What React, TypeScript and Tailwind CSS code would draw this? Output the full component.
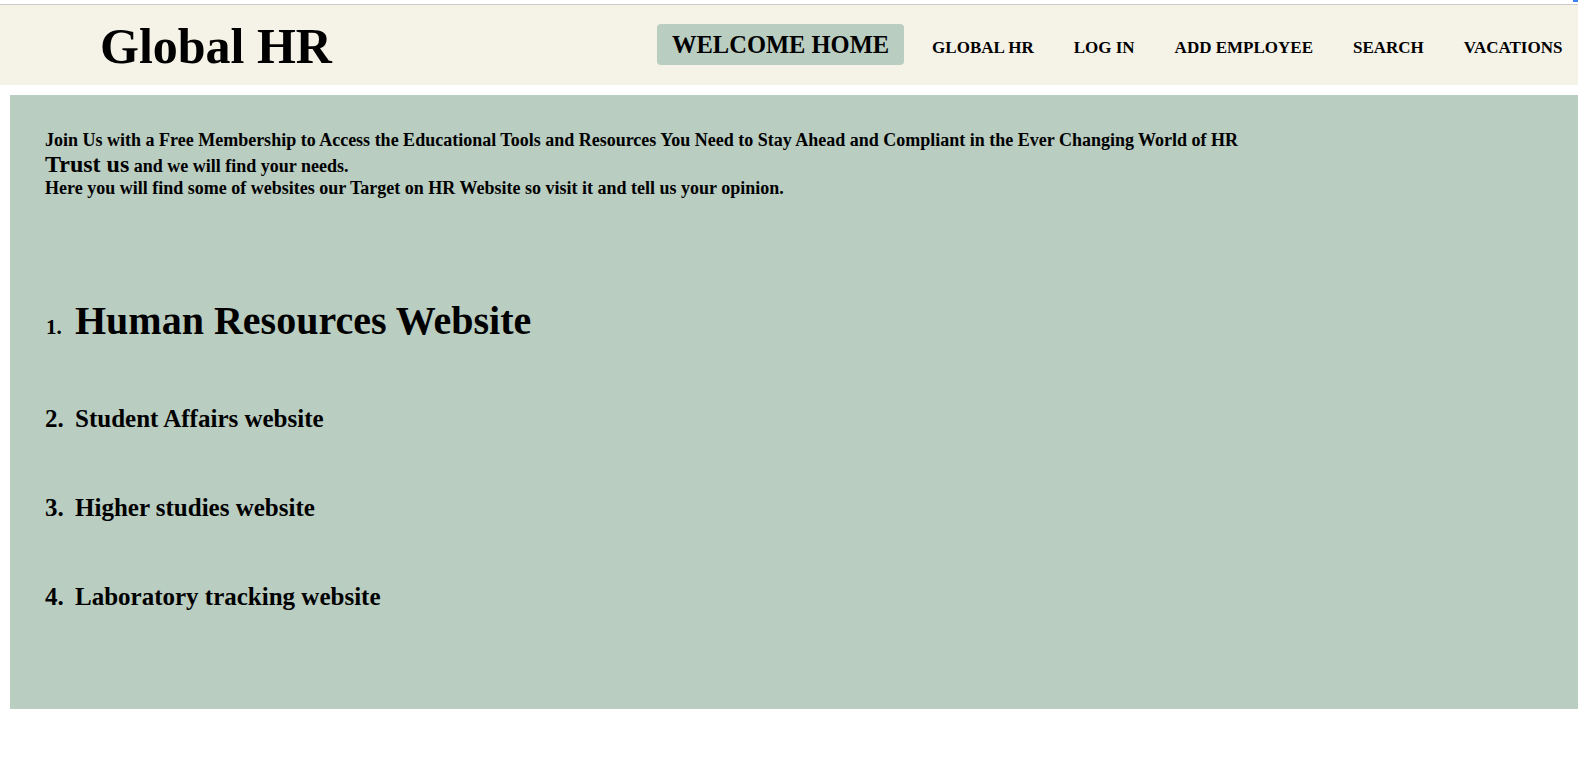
const navLinks = ["GLOBAL HR", "LOG IN", "ADD EMPLOYEE", "SEARCH", "VACATIONS"];

const sites = [
  { n: "2.", label: "Student Affairs website" },
  { n: "3.", label: "Higher studies website" },
  { n: "4.", label: "Laboratory tracking website" },
];

function Header() {
  return (
    <header className="flex h-[81px] border-t border-[#cccccc] bg-[#f5f2e8]">
      <div className="w-[657px] shrink-0 pl-[100px] pt-[13px]">
        <h1 className="text-[50px] leading-[57px] font-bold">Global HR</h1>
      </div>
      <nav className="flex items-baseline pt-[19px]">
        <a className="rounded-[4px] bg-[#b9cdc1] px-[15px] pt-[7px] pb-[6px] text-[24.5px] leading-[28px] font-bold">
          WELCOME HOME
        </a>
        <div className="ml-[28px] flex gap-[40px]">
          {navLinks.map((link) => (
            <a key={link} className="whitespace-nowrap text-[17px] leading-[20px] font-bold">
              {link}
            </a>
          ))}
        </div>
      </nav>
    </header>
  );
}

export default function App() {
  return (
    <div className="relative min-h-screen overflow-hidden bg-white pt-[4px] font-['Liberation_Serif',serif] text-black">
      <div className="absolute top-0 right-0 h-[2px] w-[5px] bg-[#3b82f6]" />
      <Header />

      <main className="mt-[10px] ml-[10px] bg-[#b9cdc1] px-[35px] pt-[35px] pb-[98px]">
        <div className="text-[18px] leading-[21px] font-bold">
          <div>
            Join Us with a Free Membership to Access the Educational Tools and Resources You Need to Stay Ahead and
            Compliant in the Ever Changing World of HR
          </div>
          <div>
            <span className="text-[24px] leading-[27px]">Trust us</span> and we will find your needs.
          </div>
          <div>Here you will find some of websites our Target on HR Website so visit it and tell us your opinion.</div>
        </div>

        <ol className="mt-[99px] flex flex-col gap-[60px] font-bold">
          <li className="flex items-baseline">
            <span className="w-[30px] shrink-0 pl-[1px] text-[21px] leading-[24px]">1.</span>
            <span className="text-[40px] leading-[46px]">Human Resources Website</span>
          </li>
          {sites.map((s) => (
            <li key={s.n} className="flex items-baseline text-[25px] leading-[29px]">
              <span className="w-[30px] shrink-0">{s.n}</span>
              <span>{s.label}</span>
            </li>
          ))}
        </ol>
      </main>
    </div>
  );
}
